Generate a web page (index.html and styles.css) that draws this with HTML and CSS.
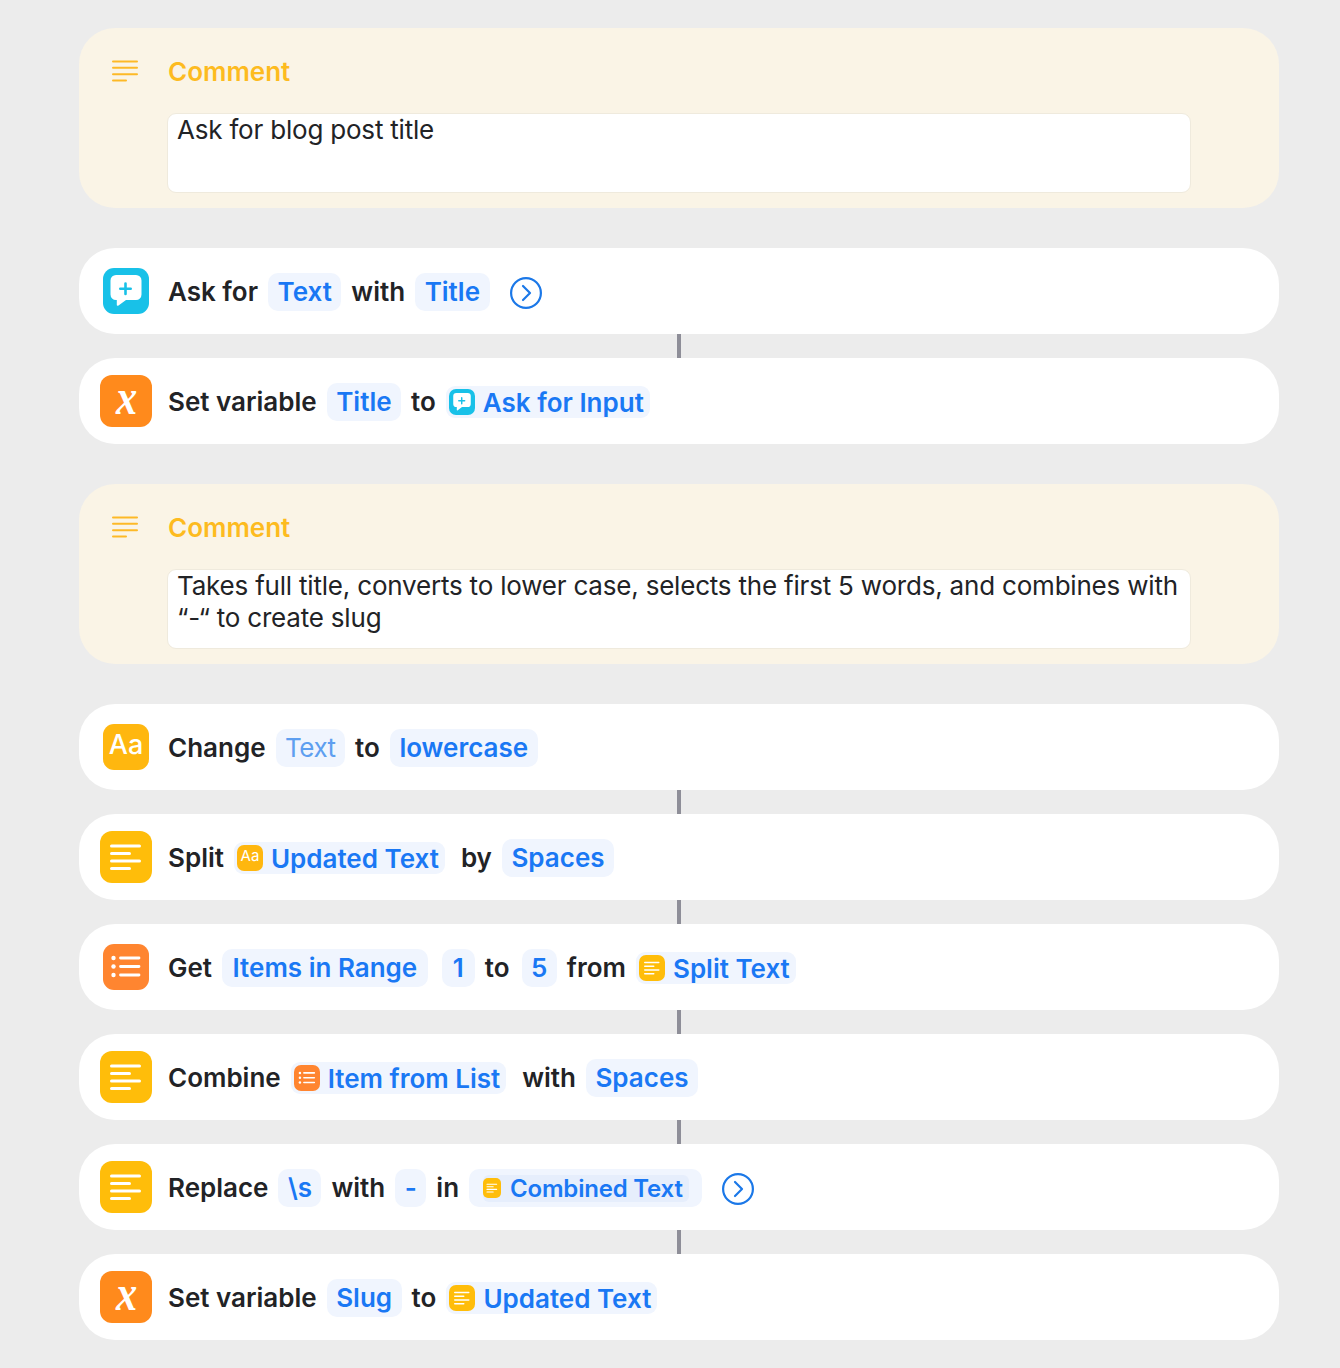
FILE: index.html
```html
<!DOCTYPE html>
<html lang="en">
<head>
<meta charset="utf-8">
<title>Shortcut actions</title>
<link rel="stylesheet" href="styles.css">
</head>
<body>
<svg class="sprite" aria-hidden="true">
  <symbol id="i-lines" viewBox="0 0 52 52"><g fill="none" stroke="#fff" stroke-width="3" stroke-linecap="round"><path d="M11.500 15H39.500M11.500 22.500H29.500M11.500 30H39.500M11.500 37.500H29.500"/></g></symbol>
  <symbol id="i-list" viewBox="0 0 46 46"><g fill="none" stroke="#fff" stroke-width="2.800" stroke-linecap="round"><path d="M17.500 14H36M17.500 22.500H36M17.500 31H36"/></g><circle cx="10.500" cy="14" r="2.200" fill="#fff"/><circle cx="10.500" cy="22.500" r="2.200" fill="#fff"/><circle cx="10.500" cy="31" r="2.200" fill="#fff"/></symbol>
  <symbol id="i-ask" viewBox="0 0 46 46"><path d="M13 7H33A5.500 5.500 0 0 1 38.500 12.500V26.500A5.500 5.500 0 0 1 33 32H23L15.500 37.500C14.500 38.200 13.800 37.800 13.800 37V32H13A5.500 5.500 0 0 1 7.500 26.500V12.500A5.500 5.500 0 0 1 13 7Z" fill="#fff"/><path d="M22.500 15.500V26M17.300 20.800H27.700" stroke="#18c1e8" stroke-width="2.600" stroke-linecap="round"/></symbol>
  <symbol id="i-chev" viewBox="0 0 32 32"><circle cx="16" cy="16" r="14.900" fill="none" stroke="#1b78e8" stroke-width="2.200"/><path d="M13 9L20 16L13 23" fill="none" stroke="#1b78e8" stroke-width="2.200" stroke-linecap="round" stroke-linejoin="round"/></symbol>
  <symbol id="i-comment" viewBox="0 0 26 22"><g fill="none" stroke="#fdb927" stroke-width="2" stroke-linecap="round"><path d="M1 1.500H25M1 7.800H25M1 14.200H25M1 20.500H14"/></g></symbol>
</svg>

<main class="flow">
  <section class="comment">
    <div class="slot"><svg class="comment-icon"><use href="#i-comment"/></svg></div>
    <div class="comment-body">
      <h2 class="comment-title">Comment</h2>
      <div class="comment-text">Ask for blog post title</div>
    </div>
  </section>

  <div class="group">
    <div class="action">
      <div class="slot"><span class="icon md cyan"><svg class="glyph"><use href="#i-ask"/></svg></span></div>
      <span class="word">Ask for</span><span class="token">Text</span><span class="word">with</span><span class="token">Title</span>
      <svg class="chev"><use href="#i-chev"/></svg>
    </div>
    <div class="link"></div>
    <div class="action">
      <div class="slot"><span class="icon lg orange"><span class="x">x</span></span></div>
      <span class="word">Set variable</span><span class="token">Title</span><span class="word">to</span>
      <span class="var"><span class="mini cyan"><svg class="glyph"><use href="#i-ask"/></svg></span>Ask for Input</span>
    </div>
  </div>

  <section class="comment">
    <div class="slot"><svg class="comment-icon"><use href="#i-comment"/></svg></div>
    <div class="comment-body">
      <h2 class="comment-title">Comment</h2>
      <div class="comment-text">Takes full title, converts to lower case, selects the first 5 words, and combines with “-“ to create slug</div>
    </div>
  </section>

  <div class="group">
    <div class="action">
      <div class="slot"><span class="icon md amber"><span class="aa">Aa</span></span></div>
      <span class="word">Change</span><span class="token faint">Text</span><span class="word">to</span><span class="token">lowercase</span>
    </div>
    <div class="link"></div>
    <div class="action">
      <div class="slot"><span class="icon lg yellow"><svg class="glyph"><use href="#i-lines"/></svg></span></div>
      <span class="word">Split</span>
      <span class="var"><span class="mini amber"><span class="aa-mini">Aa</span></span>Updated Text</span>
      <span class="word">by</span><span class="token">Spaces</span>
    </div>
    <div class="link"></div>
    <div class="action">
      <div class="slot"><span class="icon md tangerine"><svg class="glyph"><use href="#i-list"/></svg></span></div>
      <span class="word">Get</span><span class="token range">Items in Range</span><span class="token one">1</span><span class="word">to</span><span class="token five">5</span><span class="word">from</span>
      <span class="var"><span class="mini yellow"><svg class="glyph"><use href="#i-lines"/></svg></span>Split Text</span>
    </div>
    <div class="link"></div>
    <div class="action">
      <div class="slot"><span class="icon lg yellow"><svg class="glyph"><use href="#i-lines"/></svg></span></div>
      <span class="word">Combine</span>
      <span class="var"><span class="mini tangerine"><svg class="glyph"><use href="#i-list"/></svg></span>Item from List</span>
      <span class="word">with</span><span class="token">Spaces</span>
    </div>
    <div class="link"></div>
    <div class="action">
      <div class="slot"><span class="icon lg yellow"><svg class="glyph"><use href="#i-lines"/></svg></span></div>
      <span class="word">Replace</span><span class="token">\s</span><span class="word">with</span><span class="token">-</span><span class="word">in</span>
      <span class="token nest"><span class="var inner"><span class="mini yellow small"><svg class="glyph"><use href="#i-lines"/></svg></span>Combined Text</span></span>
      <svg class="chev"><use href="#i-chev"/></svg>
    </div>
    <div class="link"></div>
    <div class="action">
      <div class="slot"><span class="icon lg orange"><span class="x">x</span></span></div>
      <span class="word">Set variable</span><span class="token">Slug</span><span class="word">to</span>
      <span class="var"><span class="mini yellow"><svg class="glyph"><use href="#i-lines"/></svg></span>Updated Text</span>
    </div>
  </div>
</main>
</body>
</html>
```

FILE: styles.css
```css
* { box-sizing: border-box; }

html, body { margin: 0; }

body {
  background: #ececec;
  font-family: Inter, "Liberation Sans", sans-serif;
  color: #222326;
}

.sprite { display: none; }

.flow {
  width: 1200px;
  margin-left: 79px;
  padding: 28px 0;
  display: flex;
  flex-direction: column;
  gap: 40px;
}

.group { display: flex; flex-direction: column; }

.slot {
  width: 89px;
  flex: none;
  display: flex;
}

/* comment cards */
.comment {
  height: 180px;
  display: flex;
  background: #faf4e6;
  border-radius: 36px;
}

.comment-icon {
  width: 26px;
  height: 22px;
  margin: 32px 0 0 33px;
}

.comment-body {
  flex: none;
  width: 1024px;
  margin-left: -1px;
  padding-top: 29px;
}

.comment-title {
  margin: 0 0 26px 1px;
  font-size: 26px;
  line-height: 30px;
  font-weight: 600;
  color: #fdbb1f;
}

.comment-text {
  height: 80px;
  padding: 0 4px 0 9px;
  background: #fff;
  border: 1px solid #efeadd;
  border-radius: 9px;
  font-size: 26px;
  line-height: 32px;
  font-weight: 400;
  letter-spacing: -0.2px;
}

/* action rows */
.action {
  height: 86px;
  display: flex;
  align-items: center;
  gap: 10px;
  background: #fff;
  border-radius: 36px;
  font-size: 26px;
  font-weight: 560;
}

.action .slot { margin-right: -10px; }

.link {
  width: 4px;
  height: 24px;
  align-self: center;
  background: #8e8e98;
}

.word { white-space: nowrap; }

.token {
  height: 38px;
  margin-top: 2px;
  padding: 0 9.5px 2px;
  display: inline-flex;
  align-items: center;
  background: #f0f5fe;
  border-radius: 10px;
  color: #1a78f4;
  white-space: nowrap;
}

.token.faint { color: #5e9ff0; font-weight: 400; letter-spacing: -0.5px; }
.token.range { padding: 0 10.5px 2px; margin-right: 4px; }
.token.one { padding: 0 11px 2px; }
.token.five { margin-left: 2px; }
.token.nest { padding: 0 13px 0 14px; }

.var {
  height: 32px;
  margin: 2px 6px 0 0;
  padding: 0 6px 0 3px;
  display: inline-flex;
  align-items: center;
  gap: 8px;
  background: #f0f5fe;
  border-radius: 9px;
  color: #1a78f4;
  white-space: nowrap;
}

.var.inner {
  height: 27px;
  margin: 0;
  padding: 0 6px 0 0;
  gap: 9px;
  background: #e6eefc;
  border-radius: 6px;
  font-size: 24px;
  letter-spacing: -0.2px;
}

/* icons */
.icon {
  display: flex;
  align-items: center;
  justify-content: center;
}

.icon.lg {
  width: 52px;
  height: 52px;
  margin-left: 21px;
  border-radius: 12px;
}

.icon.md {
  width: 46px;
  height: 46px;
  margin-left: 24px;
  border-radius: 11px;
}

.mini {
  flex: none;
  width: 26px;
  height: 26px;
  display: flex;
  align-items: center;
  justify-content: center;
  border-radius: 7px;
}

.mini.small { width: 18px; height: 20px; border-radius: 5px; }

.glyph { width: 100%; height: 100%; display: block; }

.cyan { background: #18c1e8; }
.orange { background: #ff8a1c; }
.amber { background: #ffb70f; }
.yellow { background: #ffbd0a; }
.tangerine { background: #ff8530; }

.x {
  font-family: "Liberation Serif", serif;
  font-style: italic;
  font-weight: 700;
  font-size: 50px;
  line-height: 40px;
  color: #fff;
  transform: translateY(-4px) scaleX(0.85);
}

.aa {
  font-size: 27px;
  line-height: 30px;
  font-weight: 500;
  color: #fff;
  transform: translateY(-2px);
}

.aa-mini {
  font-size: 15px;
  line-height: 18px;
  font-weight: 400;
  color: #fff;
  transform: translateY(-2px);
}

.chev {
  width: 32px;
  height: 32px;
  flex: none;
  margin-left: 10px;
  transform: translateY(2px);
}
```
